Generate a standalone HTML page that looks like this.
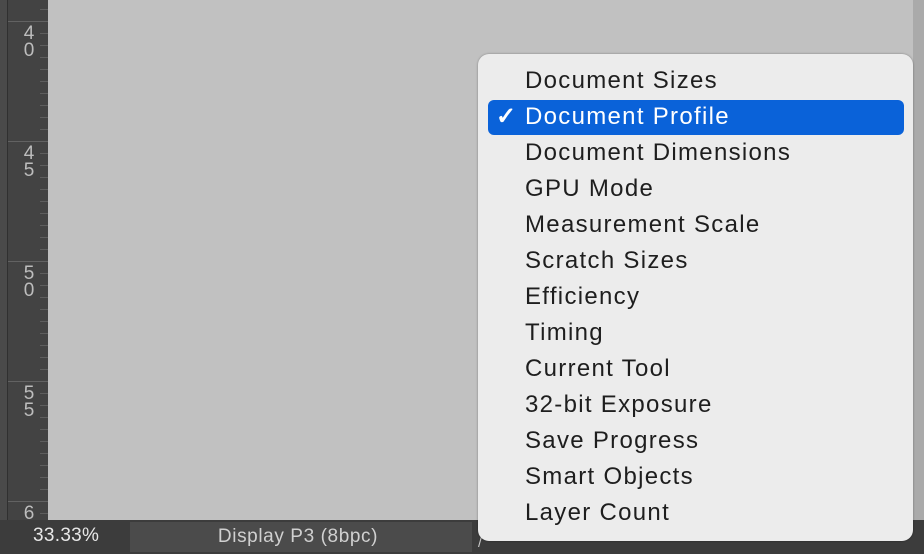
<!DOCTYPE html>
<html><head><meta charset="utf-8"><style>
*{margin:0;padding:0;box-sizing:border-box}
body{width:924px;height:554px;overflow:hidden;background:#c1c1c1;font-family:"Liberation Sans",sans-serif;position:relative}
.strip{position:absolute;left:0;top:0;width:8px;height:520px;background:#4a4a4a;border-right:1px solid #303030}
.ruler{position:absolute;left:8px;top:0;width:40px;height:520px;background:#434343}
.maj{position:absolute;left:0;width:40px;height:1px;background:#626262}
.min{position:absolute;right:0;width:8px;height:1px;background:#5e5e5e}
.lab{position:absolute;left:14px;width:14px;color:#bdbdbd;font-size:19px;line-height:17px;text-align:center}
.canvas{position:absolute;left:48px;top:0;width:876px;height:520px;background:#c1c1c1}
.shade{position:absolute;left:913px;top:0;width:11px;height:520px;background:#aaaaaa}
.bar{position:absolute;left:0;top:520px;width:924px;height:34px;background:#3c3c3c}
.zoom{position:absolute;left:33px;top:525px;color:#e8e8e8;font-size:19px;letter-spacing:0.3px}
.prof{position:absolute;left:130px;top:522px;width:342px;height:30px;background:#4b4b4b;color:#d0d0d0;font-size:19px;letter-spacing:0.6px;text-align:center;line-height:30px;padding-right:6px}
.menu{position:absolute;left:478px;top:54px;width:435px;height:487px;background:#ececec;border-radius:11px;box-shadow:0 0 2px rgba(0,0,0,.35)}
.hl{position:absolute;left:10px;top:46px;width:416px;height:35px;background:#0a62d9;border-radius:6px}
.it{position:absolute;left:47px;font-size:24px;letter-spacing:1.3px;color:#1e1e1e;line-height:36px;white-space:nowrap}
.sel{color:#fff}
.ck{position:absolute;left:18px;color:#fff;font-size:24px;font-weight:bold;line-height:36px}
</style></head><body>
<div class="canvas"></div><div class="shade"></div>
<div class="strip"></div>
<div class="ruler">
<div class="maj" style="top:21px"></div><div class="maj" style="top:141px"></div><div class="maj" style="top:261px"></div><div class="maj" style="top:381px"></div><div class="maj" style="top:501px"></div>
<div class="min" style="top:9px"></div><div class="min" style="top:33px"></div><div class="min" style="top:45px"></div><div class="min" style="top:57px"></div><div class="min" style="top:69px"></div><div class="min" style="top:81px"></div><div class="min" style="top:93px"></div><div class="min" style="top:105px"></div><div class="min" style="top:117px"></div><div class="min" style="top:129px"></div>
<div class="min" style="top:153px"></div><div class="min" style="top:165px"></div><div class="min" style="top:177px"></div><div class="min" style="top:189px"></div><div class="min" style="top:201px"></div><div class="min" style="top:213px"></div><div class="min" style="top:225px"></div><div class="min" style="top:237px"></div><div class="min" style="top:249px"></div>
<div class="min" style="top:273px"></div><div class="min" style="top:285px"></div><div class="min" style="top:297px"></div><div class="min" style="top:309px"></div><div class="min" style="top:321px"></div><div class="min" style="top:333px"></div><div class="min" style="top:345px"></div><div class="min" style="top:357px"></div><div class="min" style="top:369px"></div>
<div class="min" style="top:393px"></div><div class="min" style="top:405px"></div><div class="min" style="top:417px"></div><div class="min" style="top:429px"></div><div class="min" style="top:441px"></div><div class="min" style="top:453px"></div><div class="min" style="top:465px"></div><div class="min" style="top:477px"></div><div class="min" style="top:489px"></div><div class="min" style="top:513px"></div>
<div class="lab" style="top:25px">4<br>0</div>
<div class="lab" style="top:145px">4<br>5</div>
<div class="lab" style="top:265px">5<br>0</div>
<div class="lab" style="top:385px">5<br>5</div>
<div class="lab" style="top:505px">6</div>
</div>
<div class="bar"></div>
<div class="zoom">33.33%</div>
<div class="prof">Display P3 (8bpc)</div>
<div style="position:absolute;left:478px;top:534px;color:#ccc;font-size:14px">/</div>
<div class="menu">
<div class="hl"></div>
<div class="it" style="top:9px">Document Sizes</div>
<div class="ck" style="top:45px">✓</div>
<div class="it sel" style="top:45px">Document Profile</div>
<div class="it" style="top:81px">Document Dimensions</div>
<div class="it" style="top:117px">GPU Mode</div>
<div class="it" style="top:153px">Measurement Scale</div>
<div class="it" style="top:189px">Scratch Sizes</div>
<div class="it" style="top:225px">Efficiency</div>
<div class="it" style="top:261px">Timing</div>
<div class="it" style="top:297px">Current Tool</div>
<div class="it" style="top:333px">32-bit Exposure</div>
<div class="it" style="top:369px">Save Progress</div>
<div class="it" style="top:405px">Smart Objects</div>
<div class="it" style="top:441px">Layer Count</div>
</div>
</body></html>
